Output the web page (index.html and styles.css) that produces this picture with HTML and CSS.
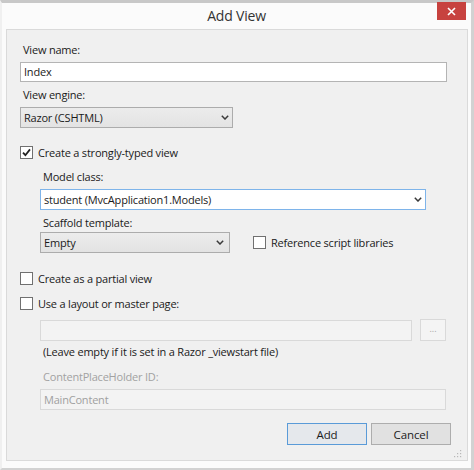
FILE: index.html
```html
<!DOCTYPE html>
<html>
<head>
<meta charset="utf-8">
<link rel="stylesheet" href="styles.css">
<title>Add View</title>
</head>
<body>
<div class="window">
  <div class="titlebar">
    <span class="spacer"></span>
    <span class="title">Add View</span>
    <button class="close" aria-label="Close">
      <svg width="9" height="9" viewBox="0 0 9 9"><path d="M1 1L8 8M8 1L1 8" stroke="#fff" stroke-width="1.6" fill="none"/></svg>
    </button>
  </div>
  <div class="panel">
    <div class="label l-first">View name:</div>
    <div class="textbox tb-name">Index</div>
    <div class="label l-tight">View engine:</div>
    <div class="combo combo-gray cb-engine"><span>Razor (CSHTML)</span><svg class="chev" width="8" height="5" viewBox="0 0 8 5"><path d="M0.8 0.8L4 4L7.2 0.8" stroke="#3a3a3a" stroke-width="1.5" fill="none"/></svg></div>

    <div class="check-row cr-typed">
      <span class="checkbox checked"><svg width="11" height="11" viewBox="0 0 11 11"><path d="M2 5.6L4.4 8.2L9 2.4" stroke="#222" stroke-width="1.8" fill="none"/></svg></span>
      <span>Create a strongly-typed view</span>
    </div>
    <div class="indent">
      <div class="label l-model">Model class:</div>
      <div class="combo combo-focus cb-model"><span>student (MvcApplication1.Models)</span><svg class="chev" width="8" height="5" viewBox="0 0 8 5"><path d="M0.8 0.8L4 4L7.2 0.8" stroke="#3a3a3a" stroke-width="1.5" fill="none"/></svg></div>
      <div class="label l-tight">Scaffold template:</div>
      <div class="scaffold-row">
        <div class="combo combo-gray cb-scaffold"><span>Empty</span><svg class="chev" width="8" height="5" viewBox="0 0 8 5"><path d="M0.8 0.8L4 4L7.2 0.8" stroke="#3a3a3a" stroke-width="1.5" fill="none"/></svg></div>
        <div class="check-row cr-ref">
          <span class="checkbox"></span>
          <span>Reference script libraries</span>
        </div>
      </div>
    </div>

    <div class="check-row cr-partial">
      <span class="checkbox"></span>
      <span>Create as a partial view</span>
    </div>
    <div class="check-row cr-layout">
      <span class="checkbox"></span>
      <span>Use a layout or master page:</span>
    </div>
    <div class="indent">
      <div class="layout-row">
        <div class="textbox disabled tb-layout"></div>
        <button class="browse" disabled>...</button>
      </div>
      <div class="label l-hint">(Leave empty if it is set in a Razor _viewstart file)</div>
      <div class="label label-disabled l-cph">ContentPlaceHolder ID:</div>
      <div class="textbox disabled tb-cph">MainContent</div>
    </div>

    <div class="buttons">
      <button class="btn btn-default">Add</button>
      <button class="btn">Cancel</button>
    </div>
    <svg class="grip" width="8" height="8" viewBox="0 0 8 8">
      <rect x="6" y="0" width="1.2" height="1.2" fill="#b8b8b8"/>
      <rect x="3" y="3" width="1.2" height="1.2" fill="#b8b8b8"/>
      <rect x="6" y="3" width="1.2" height="1.2" fill="#b8b8b8"/>
      <rect x="0" y="6" width="1.2" height="1.2" fill="#b8b8b8"/>
      <rect x="3" y="6" width="1.2" height="1.2" fill="#b8b8b8"/>
      <rect x="6" y="6" width="1.2" height="1.2" fill="#b8b8b8"/>
    </svg>
  </div>
</div>
</body>
</html>
```
FILE: styles.css
```css
html, body {
  margin: 0;
  padding: 0;
  background: #ffffff;
}

.window {
  box-sizing: border-box;
  width: 474px;
  height: 470px;
  background: #fbfbfb;
  border-top: 3px solid #c8c8c8;
  border-left: 2px solid #f0f0f0;
  border-right: 3px solid #d2d2d2;
  border-bottom: 2px solid #d2d2d2;
  font-family: "Open Sans", "Noto Sans", sans-serif;
  font-size: 11px;
  letter-spacing: -0.2px;
  color: #1a1a1a;
}

.titlebar {
  height: 26px;
  display: grid;
  grid-template-columns: 1fr auto 1fr;
  align-items: center;
}

.title {
  font-size: 14px;
  letter-spacing: -0.2px;
  color: #333333;
  line-height: 20px;
  margin-top: -1px;
}

.close {
  justify-self: end;
  align-self: start;
  margin: -1px 5px 0 0;
  width: 29px;
  height: 18px;
  padding: 0;
  border: none;
  background: #c7423f;
  display: flex;
  align-items: center;
  justify-content: center;
}

.panel {
  position: relative;
  box-sizing: border-box;
  margin-left: 4px;
  width: 462px;
  height: 432px;
  background: #f0f0f0;
  border: 1px solid #dadada;
  padding: 0 20px 0 13px;
}

.label {
  line-height: 16px;
  height: 16px;
  white-space: nowrap;
  padding-left: 3px;
}

.l-first { margin-top: 12px; }
.l-tight { margin-top: 5px; }
.l-model { margin-top: 9px; }
.l-hint { margin-top: 3px; }
.l-cph { margin-top: 9px; }

.label-disabled { color: #a2a2a2; }

.textbox {
  box-sizing: border-box;
  height: 20px;
  background: #ffffff;
  border: 1px solid #b4b4b4;
  line-height: 18px;
  padding-left: 3px;
  margin-top: 4px;
}

.tb-name { width: 427px; }

.textbox.disabled {
  background: #f3f3f3;
  border-color: #d9d9d9;
  color: #a0a0a0;
  height: 21px;
  line-height: 19px;
}

.tb-layout { width: 372px; margin-top: 0; }
.tb-cph { width: 406px; }

.combo {
  box-sizing: border-box;
  height: 21px;
  display: flex;
  align-items: center;
  justify-content: space-between;
  padding: 0 3px 0 3px;
  margin-top: 4px;
}

.combo-gray {
  background: linear-gradient(#ececec, #e3e3e3);
  border: 1px solid #acacac;
}

.combo-focus {
  background: #ffffff;
  border: 1px solid #7eb4ea;
}

.cb-engine { width: 213px; }
.cb-model { width: 386px; }
.cb-scaffold { width: 190px; margin-top: 0; padding-right: 5px; }

.check-row {
  display: flex;
  align-items: center;
  height: 16px;
  white-space: nowrap;
}

.checkbox {
  box-sizing: border-box;
  width: 13px;
  height: 13px;
  background: #ffffff;
  border: 1px solid #707070;
  margin-right: 5px;
  display: flex;
  align-items: center;
  justify-content: center;
  flex: none;
}

.cr-typed { margin-top: 16px; }
.cr-partial { margin-top: 17px; }
.cr-layout { margin-top: 9px; }
.cr-ref { margin-left: 23px; }

.indent {
  padding-left: 20px;
}

.scaffold-row {
  display: flex;
  align-items: center;
  margin-top: 1px;
}

.layout-row {
  display: flex;
  align-items: center;
  gap: 8px;
  margin-top: 8px;
}

.browse {
  box-sizing: border-box;
  width: 26px;
  height: 22px;
  padding: 0 0 4px 0;
  background: #f4f4f4;
  border: 1px solid #d9d9d9;
  color: #a8a8a8;
  font-family: "Open Sans", "Noto Sans", sans-serif;
  font-size: 9px;
  line-height: 1;
}

.buttons {
  display: flex;
  justify-content: flex-end;
  gap: 4px;
  margin-top: 13px;
  margin-right: -4px;
}

.btn {
  box-sizing: border-box;
  width: 80px;
  height: 22px;
  padding: 0;
  background: #e1e1e1;
  border: 1px solid #adadad;
  font-family: "Open Sans", "Noto Sans", sans-serif;
  font-size: 11.5px;
  letter-spacing: -0.1px;
  color: #1c1c1c;
}

.btn-default {
  border-color: #5a9bd8;
  background: #e5e8ec;
}

.grip {
  position: absolute;
  right: 5px;
  bottom: 2px;
}
```
